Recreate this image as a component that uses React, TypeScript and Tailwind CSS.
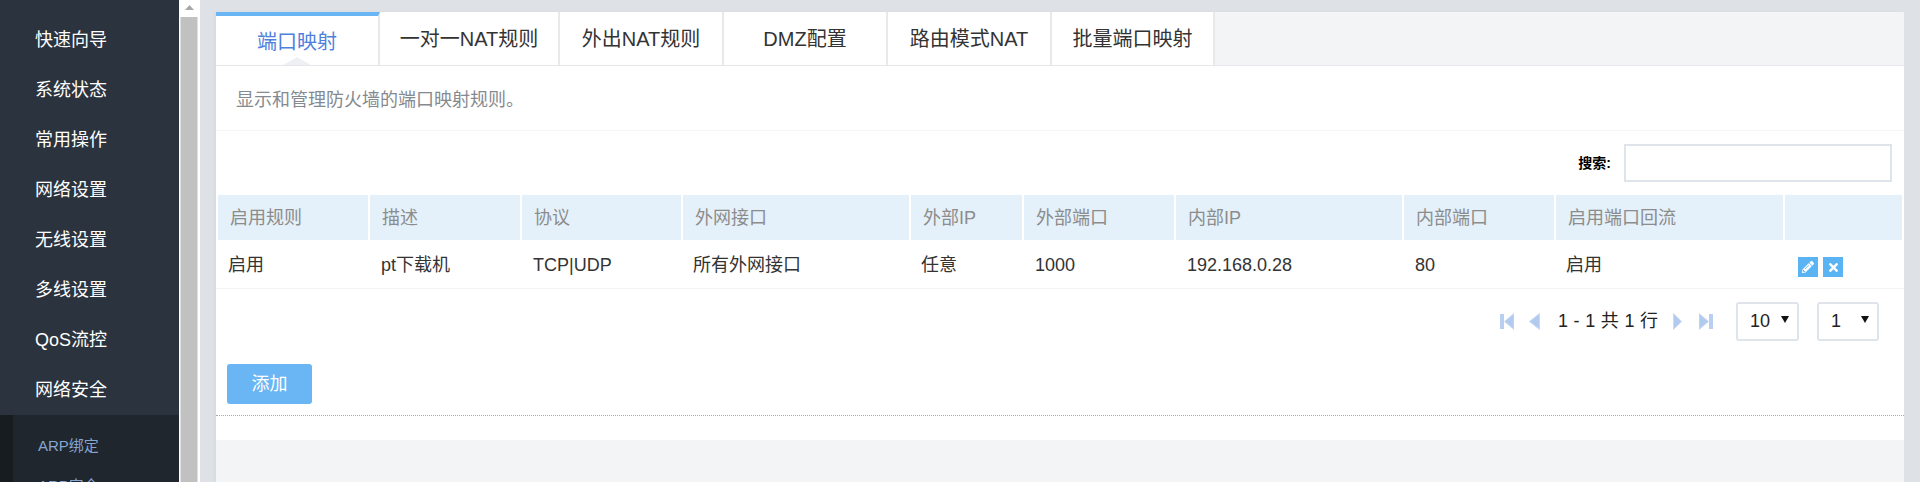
import { FaPencilAlt, FaTimes } from "react-icons/fa";

const cjk = "font-['Liberation_Sans','Noto_Sans_CJK_SC',sans-serif]";
const cols =
  "grid grid-cols-[150px_150px_159px_226px_111px_150px_226px_150px_227px_117px] gap-x-[2px] px-[2px]";

const menu = ["快速向导", "系统状态", "常用操作", "网络设置", "无线设置", "多线设置", "QoS流控", "网络安全"];
const subMenu = ["ARP绑定", "ARP安全"];
const tabs = ["端口映射", "一对一NAT规则", "外出NAT规则", "DMZ配置", "路由模式NAT", "批量端口映射"];
const tabWidths = ["w-[164px]", "w-[180px]", "w-[164px]", "w-[164px]", "w-[164px]", "w-[163px]"];
const heads = ["启用规则", "描述", "协议", "外网接口", "外部IP", "外部端口", "内部IP", "内部端口", "启用端口回流", ""];
const row = [
  { text: "启用", pad: "pl-[10px]" },
  { text: "pt下载机", pad: "pl-[11px]" },
  { text: "TCP|UDP", pad: "pl-[11px]" },
  { text: "所有外网接口", pad: "pl-[10px]" },
  { text: "任意", pad: "pl-[10px]" },
  { text: "1000", pad: "pl-[11px]" },
  { text: "192.168.0.28", pad: "pl-[11px]" },
  { text: "80", pad: "pl-[11px]" },
  { text: "启用", pad: "pl-[10px]" },
];

function PageIcon({ type }: { type: "first" | "prev" | "next" | "last" }) {
  const flip = type === "next" || type === "last";
  const bar = type === "first" || type === "last";
  return (
    <svg
      width={bar ? 14 : type === "prev" ? 11 : 9}
      height="17"
      viewBox={bar ? "0 0 14 17" : "0 0 11 17"}
      preserveAspectRatio="none"
      className={flip ? "-scale-x-100" : ""}
    >
      {bar && <rect x="0" y="1" width="4" height="15" fill="#b9cff1" />}
      {bar ? (
        <path d="M14 0.5V16.5L4.5 8.5Z" fill="#b3caef" stroke="#c9daf5" />
      ) : (
        <path d="M10.5 0.5V16.5L0.5 8.5Z" fill="#b3caef" stroke="#c9daf5" />
      )}
    </svg>
  );
}

function PageSelect({ value, width }: { value: string; width: string }) {
  return (
    <div className={`relative ${width} h-[39px]`}>
      <select
        defaultValue={value}
        className={`appearance-none w-full h-full border-2 border-[#dfe4ea] rounded-[3px] bg-white pl-[12px] text-[18px] text-[#222] ${cjk}`}
      >
        <option>{value}</option>
      </select>
      <svg width="8" height="7" viewBox="0 0 8 7" className="absolute right-[10px] top-[14px]">
        <path d="M0 0H8L4 7Z" fill="#111" />
      </svg>
    </div>
  );
}

export default function App() {
  return (
    <div className={`flex h-screen overflow-hidden bg-[#dee1e6] ${cjk}`}>
      {/* sidebar */}
      <div className="w-[179px] shrink-0 bg-[#2b333e] pt-[15px]">
        {menu.map((m) => (
          <div key={m} className="h-[50px] pl-[35px] leading-[50px] text-[18px] text-white">
            {m}
          </div>
        ))}
        <div className="h-[200px] border-l-[13px] border-[#171c20] bg-[#1f262e] pt-[11px]">
          {subMenu.map((m) => (
            <div key={m} className="h-[40px] pl-[25px] leading-[40px] text-[15px] text-[#86a5cf]">
              {m}
            </div>
          ))}
        </div>
      </div>

      {/* scrollbar */}
      <div className="w-[21px] shrink-0 flex flex-col items-center bg-white">
        <svg width="9" height="17" viewBox="0 0 9 17">
          <path d="M0 10L4.5 5L9 10Z" fill="#a8a8a8" />
        </svg>
        <div className="w-[17px] flex-1 -translate-x-[0.5px] bg-[#c1c1c1]" />
      </div>

      {/* content */}
      <div className="flex-1 px-4 pt-3">
        <div className="h-full bg-[#f3f4f6] shadow-[-2px_0_3px_rgba(0,0,0,0.03)]">
          <div className="flex h-[54px] border-b border-[#e6e7ea]">
            {tabs.map((t, i) => (
              <div
                key={t}
                className={`relative ${tabWidths[i]} flex items-center justify-center bg-white border-r-2 border-[#e8e9ec] text-[20px] ${
                  i === 0 ? "border-t-4 border-t-[#6ab5f3] pt-[2px] text-[#4f80dc]" : "text-[#333]"
                }`}
              >
                {t}
                {i === 0 && (
                  <svg width="28" height="8" viewBox="0 0 28 8" className="absolute bottom-0 left-[67px]">
                    <path d="M0 8L14 0L28 8Z" fill="#eef0f3" />
                  </svg>
                )}
              </div>
            ))}
          </div>

          <div className="bg-white">
            <div className="h-[65px] border-b border-[#f6f6f6] pl-[20px] leading-[68px] text-[18px] text-[#858a90]">
              显示和管理防火墙的端口映射规则。
            </div>

            <div className="flex h-[64px] items-start justify-end pr-[12px] pt-[13px]">
              <span className="mr-[13px] mt-[9px] text-[14px] leading-[20px] font-bold text-black">搜索:</span>
              <input className="h-[38px] w-[268px] border-2 border-[#dfe4ea] bg-white" />
            </div>

            <div className={`${cols} grid-rows-[45px] h-[45px]`}>
              {heads.map((h, i) => (
                <div key={i} className="bg-[#e4f1fa] pl-[12px] text-[18px] leading-[47px] text-[#8c8c8c]">
                  {h}
                </div>
              ))}
            </div>

            <div className={`${cols} grid-rows-[48px] h-[49px] border-b border-[#f3f3f3]`}>
              {row.map((c, i) => (
                <div key={i} className={`${c.pad} text-[18px] leading-[50px] text-[#333]`}>
                  {c.text}
                </div>
              ))}
              <div className="flex items-start gap-[5px] pl-[13px] pt-[17px]">
                <span className="flex h-[20px] w-[20px] items-center justify-center bg-[#5ab4f4] text-white">
                  <FaPencilAlt size={12} />
                </span>
                <span className="flex h-[20px] w-[20px] items-center justify-center bg-[#5ab4f4] text-white">
                  <FaTimes size={13} />
                </span>
              </div>
            </div>

            <div className="flex items-center justify-end pr-[25px] pt-[13px] text-[18px] text-[#222]">
              <PageIcon type="first" />
              <span className="w-[15px]" />
              <PageIcon type="prev" />
              <span className="whitespace-pre pl-[18px] pr-[15px] [word-spacing:0.6px]">1 - 1 共 1 行</span>
              <PageIcon type="next" />
              <span className="w-[17px]" />
              <PageIcon type="last" />
              <span className="w-[23px]" />
              <PageSelect value="10" width="w-[63px]" />
              <span className="w-[18px]" />
              <PageSelect value="1" width="w-[62px]" />
            </div>

            <div className="border-b border-dotted border-[#aaa] px-[11px] pb-[11px] pt-[23px]">
              <button className="block h-[40px] w-[85px] rounded-[3px] bg-[#6ab5f3] text-[18px] text-white">添加</button>
            </div>
            <div className="h-[24px]" />
          </div>
        </div>
      </div>
    </div>
  );
}
